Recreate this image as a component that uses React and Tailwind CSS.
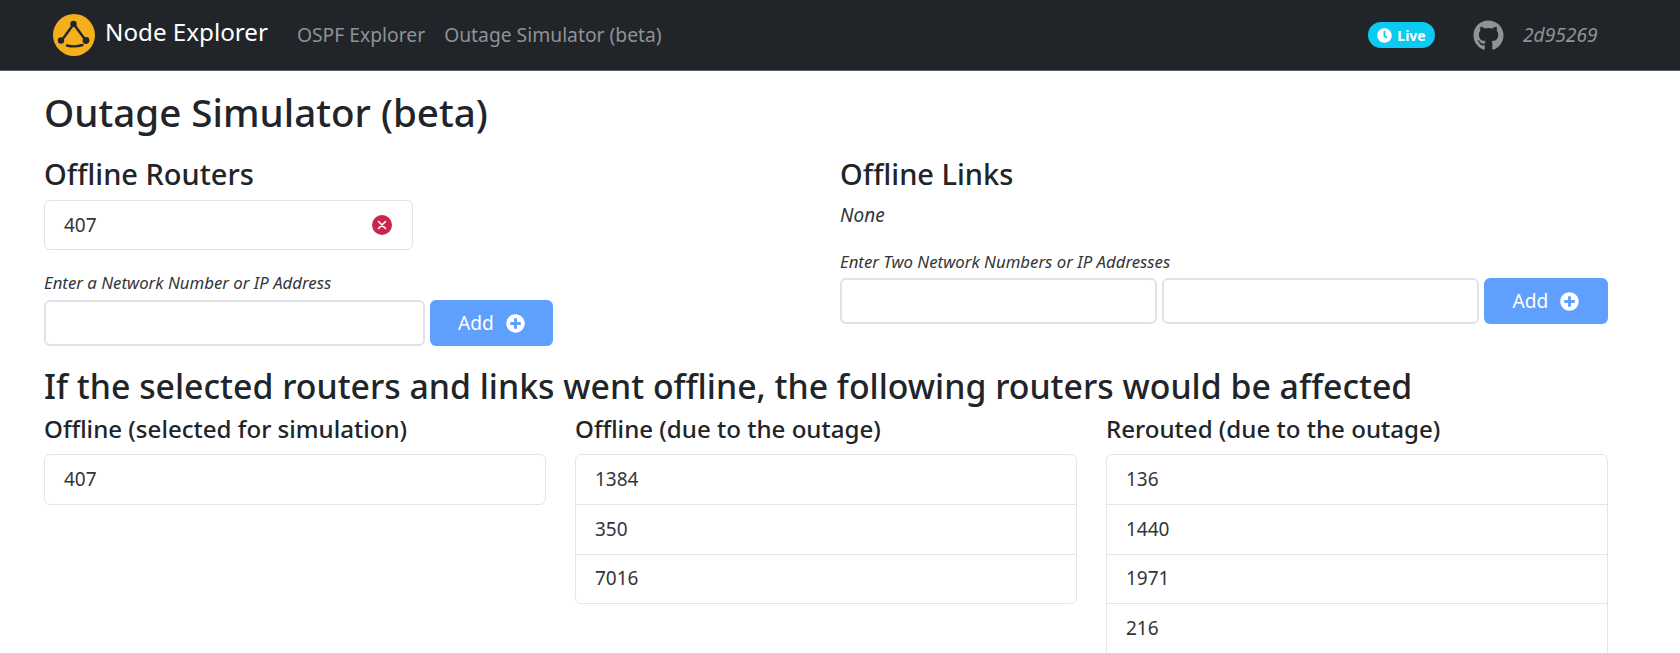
import React from "react";
import { FaClock, FaGithub, FaPlusCircle } from "react-icons/fa";

const offlineSelected = ["407"];
const offlineDue = ["1384", "350", "7016"];
const rerouted = ["136", "1440", "1971", "216"];

const Logo = () => (
  <svg viewBox="0 0 42 42" className="w-[42px] h-[42px] shrink-0">
    <circle cx="21" cy="21" r="21" fill="#f4b01a" />
    <g fill="none" stroke="#212529" strokeWidth="2.4" strokeLinecap="round">
      <path d="M21 10.5 L32.5 26" />
      <path d="M18.5 13 L9 26" />
      <path d="M14 31.5 Q22 33.5 29.5 31" />
    </g>
    <circle cx="20.5" cy="10" r="3.2" fill="#212529" />
    <circle cx="8" cy="26.5" r="3.2" fill="#212529" />
    <circle cx="33" cy="26.5" r="3.4" fill="#212529" />
  </svg>
);

const ClearIcon = () => (
  <svg viewBox="0 0 20 20" className="w-5 h-5 shrink-0">
    <circle cx="10" cy="10" r="10" fill="#c9264f" />
    <path d="M6.5 6.5 L13.5 13.5 M13.5 6.5 L6.5 13.5" stroke="#fff" strokeWidth="1.6" strokeLinecap="round" />
  </svg>
);

const AddButton = ({ className }) => (
  <button className={`h-[46px] bg-[#5fa0ff] rounded-md text-white text-[19.2px] flex items-center justify-center gap-[12px] shrink-0 ${className}`}>
    Add <FaPlusCircle className="text-white text-[19px]" />
  </button>
);

const ListColumn = ({ title, items, clipped }) => (
  <div className="min-w-0">
    <h5 className="text-[24.1px] font-medium leading-[28px]">{title}</h5>
    <ul className={`mt-[11px] border border-[#e3e5e8] text-[19px] leading-[27px] text-[#32363a] ${clipped ? "rounded-t-md border-b-0" : "rounded-md"}`}>
      {items.map((item, i) => (
        <li key={item} className={`px-[19px] h-[49.4px] flex items-center ${i > 0 ? "border-t border-[#e3e5e8]" : ""}`}>
          {item}
        </li>
      ))}
    </ul>
  </div>
);

export default function App() {
  return (
    <div className="h-screen overflow-hidden bg-white font-['Noto_Sans',sans-serif] text-[#212529]">
      <nav className="h-[71px] bg-[#212529] border-b border-[#5a5f64] flex items-center pl-[53px] pr-[82px]">
        <Logo />
        <a className="ml-[10px] text-white text-[24.2px] leading-none -mt-[6px]">Node Explorer</a>
        <a className="ml-[29px] text-[#8f9296] text-[19.3px]">OSPF Explorer</a>
        <a className="ml-[19px] text-[#8f9296] text-[19.3px]">Outage Simulator (beta)</a>
        <span className="ml-auto h-[26px] w-[67px] rounded-full bg-[#0dcaf0] text-white text-[14px] font-bold flex items-center justify-center gap-[5px]">
          <FaClock className="text-[15px]" /> Live
        </span>
        <FaGithub className="ml-[38px] text-[#8f9296] text-[31px]" />
        <span className="ml-[19px] text-[#8f9296] text-[19.2px] italic w-[75px] whitespace-nowrap">2d95269</span>
      </nav>

      <main className="pl-[44px] pr-[72px]">
        <h1 className="pt-[18px] text-[38.6px] font-medium leading-[46px]">Outage Simulator (beta)</h1>

        <div className="grid grid-cols-2 gap-x-[28px] mt-[23px]">
          <div>
            <h4 className="text-[29px] font-medium leading-[32px]">Offline Routers</h4>
            <div className="mt-[10px] w-[369px] h-[50px] border border-[#dfe2e6] rounded-md pl-[19px] pr-[20px] flex items-center justify-between text-[19px] text-[#32363a]">
              407
              <ClearIcon />
            </div>
            <p className="mt-[22px] text-[16.8px] leading-[22px] italic text-[#32363a]">Enter a Network Number or IP Address</p>
            <div className="mt-[6px] flex gap-[5px]">
              <input className="w-[381px] h-[46px] border-2 border-[#dfe2e6] rounded-md outline-none" />
              <AddButton className="w-[123px]" />
            </div>
          </div>
          <div>
            <h4 className="text-[29px] font-medium leading-[32px]">Offline Links</h4>
            <p className="mt-[12px] text-[19px] leading-[27px] italic text-[#32363a]">None</p>
            <p className="mt-[22px] text-[16.8px] leading-[22px] italic text-[#32363a]">Enter Two Network Numbers or IP Addresses</p>
            <div className="mt-[5px] flex gap-[5px]">
              <input className="w-[317px] h-[46px] border-2 border-[#dfe2e6] rounded-md outline-none" />
              <input className="w-[317px] h-[46px] border-2 border-[#dfe2e6] rounded-md outline-none" />
              <AddButton className="w-[124px]" />
            </div>
          </div>
        </div>

        <h3 className="mt-[21px] text-[33.8px] font-medium leading-[38px]">If the selected routers and links went offline, the following routers would be affected</h3>

        <div className="grid grid-cols-3 gap-x-[29px] mt-[10px]">
          <ListColumn title="Offline (selected for simulation)" items={offlineSelected} />
          <ListColumn title="Offline (due to the outage)" items={offlineDue} />
          <ListColumn title="Rerouted (due to the outage)" items={rerouted} clipped />
        </div>
      </main>
    </div>
  );
}
